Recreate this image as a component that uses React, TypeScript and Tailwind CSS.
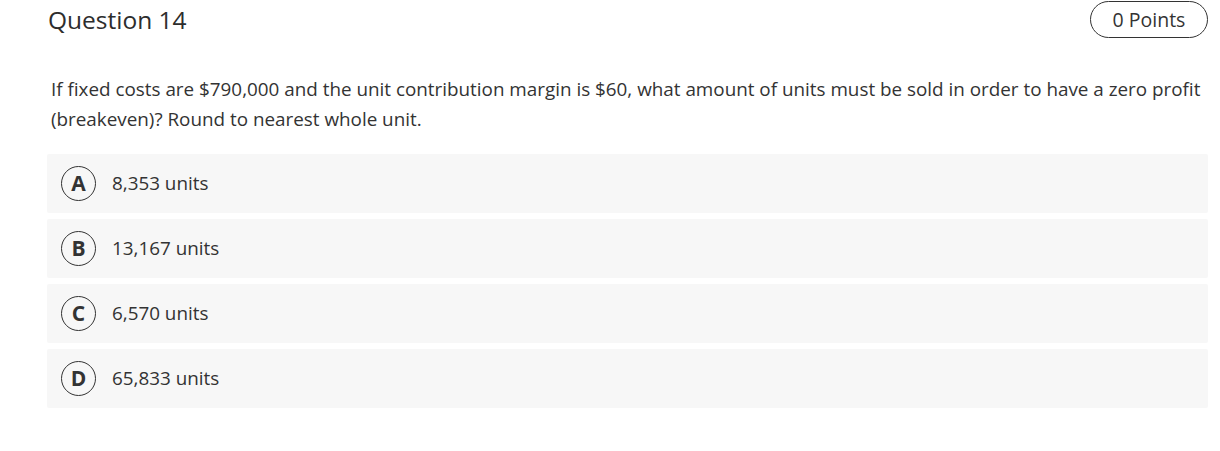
export default function App() {
  const options = [
    { letter: "A", text: "8,353 units" },
    { letter: "B", text: "13,167 units" },
    { letter: "C", text: "6,570 units" },
    { letter: "D", text: "65,833 units" },
  ];

  return (
    <div className="min-h-[451px] bg-white pl-[47px] pr-[10px] pt-[1px] text-[#333] [font-family:'Open_Sans',sans-serif]">
      <div className="mr-[2px] flex items-center justify-between">
        <h2 className="pl-[1px] text-[24.5px] font-normal leading-[37px] text-[#2d2d2d]">Question 14</h2>
        <div className="flex h-[37px] w-[118px] items-center justify-center rounded-full border-[1.5px] border-[#333] text-[19.5px] text-[#333]">
          0 Points
        </div>
      </div>

      <p className="mt-[36px] pl-[4px] text-[18.85px] leading-[30px] text-[#333]">
        If fixed costs are $790,000 and the unit contribution margin is $60, what amount of units must be sold in order to have a zero profit (breakeven)? Round to nearest whole unit.
      </p>

      <div className="mr-[2px] mt-[20px] flex flex-col gap-[6px]">
        {options.map((o) => (
          <div key={o.letter} className="flex h-[59px] items-center rounded-[2px] bg-[#f7f7f7] pl-[14px]">
            <span className="flex h-[35px] w-[35px] items-center justify-center rounded-full border-[1.5px] border-[#333] text-[21px] leading-none font-bold text-[#333]">
              {o.letter}
            </span>
            <span className="ml-[16px] text-[18.85px] text-[#333]">{o.text}</span>
          </div>
        ))}
      </div>
    </div>
  );
}
